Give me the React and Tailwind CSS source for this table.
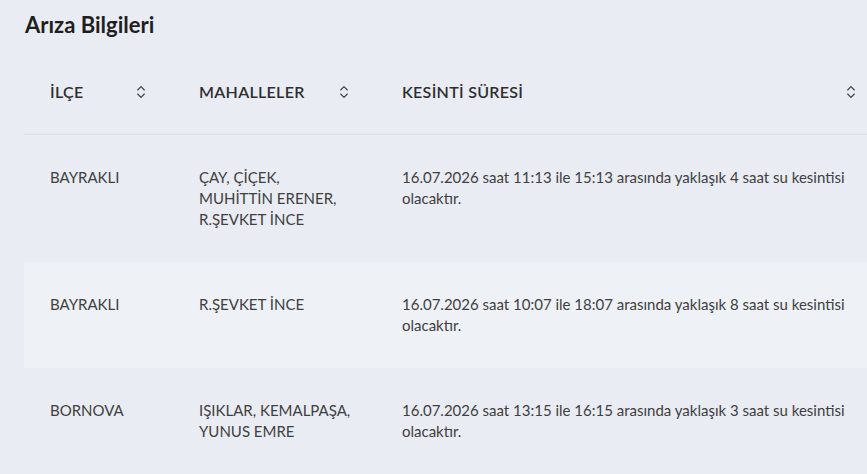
import React from "react";

function SortIcon() {
  return (
    <svg width="16" height="18" viewBox="0 0 24 24" fill="none" stroke="#3a3a3a" strokeWidth="1.6" strokeLinecap="round" strokeLinejoin="round">
      <path d="m7 15 5 5 5-5" />
      <path d="m7 9 5-5 5 5" />
    </svg>
  );
}

const rows = [
  {
    ilce: "BAYRAKLI",
    mah: "ÇAY, ÇİÇEK, MUHİTTİN ERENER, R.ŞEVKET İNCE",
    text: "16.07.2026 saat 11:13 ile 15:13 arasında yaklaşık 4 saat su kesintisi olacaktır.",
  },
  {
    ilce: "BAYRAKLI",
    mah: "R.ŞEVKET İNCE",
    text: "16.07.2026 saat 10:07 ile 18:07 arasında yaklaşık 8 saat su kesintisi olacaktır.",
  },
  {
    ilce: "BORNOVA",
    mah: "IŞIKLAR, KEMALPAŞA, YUNUS EMRE",
    text: "16.07.2026 saat 13:15 ile 16:15 arasında yaklaşık 3 saat su kesintisi olacaktır.",
  },
];

export default function App() {
  return (
    <div
      className="w-[867px] h-[474px] overflow-hidden bg-[#e9ecf3] text-[#404040]"
      style={{ fontFamily: "Lato, 'Noto Sans', sans-serif" }}
    >
      <h2 className="pl-[25px] pt-[11px] text-[22px] leading-[28px] font-bold text-[#1f1f1f]">
        Arıza Bilgileri
      </h2>
      <table className="ml-[24px] mt-[10px] w-[859px] table-fixed border-collapse">
        <colgroup>
          <col className="w-[149px]" />
          <col className="w-[203px]" />
          <col className="w-[507px]" />
        </colgroup>
        <thead>
          <tr className="border-b border-[#dcdfe6]">
            <th className="pl-[26px] pr-[24px] py-[32px] text-left font-semibold">
              <div className="flex items-center justify-between text-[16px] leading-[21px] tracking-[0.3px] text-[#2e2e2e]">
                <span>İLÇE</span>
                <SortIcon />
              </div>
            </th>
            <th className="pl-[26px] pr-[24px] py-[32px] text-left font-semibold">
              <div className="flex items-center justify-between text-[16px] leading-[21px] tracking-[0.3px] text-[#2e2e2e]">
                <span>MAHALLELER</span>
                <SortIcon />
              </div>
            </th>
            <th className="pl-[26px] pr-[24px] py-[32px] text-left font-semibold">
              <div className="flex items-center justify-between text-[16px] leading-[21px] tracking-[0.3px] text-[#2e2e2e]">
                <span>KESİNTİ SÜRESİ</span>
                <SortIcon />
              </div>
            </th>
          </tr>
        </thead>
        <tbody>
          {rows.map((r, i) => (
            <tr key={i} className={i === 1 ? "bg-[#eef1f6]" : ""}>
              <td className="pl-[26px] pr-[10px] py-[32px] align-top text-[15px] leading-[21px]">{r.ilce}</td>
              <td className="pl-[26px] pr-[24px] py-[32px] align-top text-[15px] leading-[21px]">{r.mah}</td>
              <td className="pl-[26px] pr-[24px] py-[32px] align-top text-[15px] leading-[21px]">{r.text}</td>
            </tr>
          ))}
        </tbody>
      </table>
    </div>
  );
}
